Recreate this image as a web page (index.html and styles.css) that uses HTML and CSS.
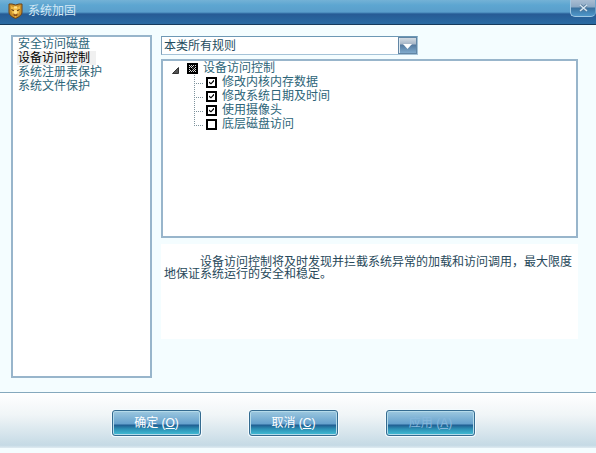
FILE: index.html
```html
<!DOCTYPE html>
<html lang="zh-CN">
<head>
<meta charset="utf-8">
<meta name="viewport" content="width=device-width, initial-scale=1">
<title>系统加固</title>
<link rel="stylesheet" href="styles.css">
</head>
<body>
<div class="window">
  <header class="titlebar">
    <svg class="badge" viewBox="0 0 15 16" aria-hidden="true">
      <path d="M1 1h3l3.500 1L11 1h3v8c0 3-3 5-6.500 6.500C4 14 1 12 1 9z" fill="#c9902c" stroke="#6b4218"/>
      <path d="M3 3l2 1 2.500-1L10 4l2-1v3l-1 4-3.500 4L4 10 3 6z" fill="#efb944"/>
      <path d="M6 3.500h3v2H6z" fill="#ffe28c"/>
      <path d="M3 6l3 1v1L4 7.500zM12 6L9 7v1l2-.5z" fill="#5c3410"/>
      <path d="M6.500 7h2l1 3-2 1-2-1z" fill="#ffe08a"/>
      <path d="M5 10.500l2.500 1 2.500-1-1 2.500H6z" fill="#8a4d1c"/>
    </svg>
    <h1 class="title">系统加固</h1>
    <button class="close" type="button" aria-label="关闭">
      <svg viewBox="0 0 9 8" aria-hidden="true"><path d="M1.500 1.500l6 5M7.500 1.500l-6 5" stroke="#56799b" stroke-width="3"/><path d="M1 1l7 6M8 1l-7 6" stroke="#d5e5f0" stroke-width="1.500"/></svg>
    </button>
  </header>

  <main class="content">
    <nav class="panel categories">
      <a class="category" href="#disk">安全访问磁盘</a>
      <a class="category current" href="#device" aria-current="true">设备访问控制</a>
      <a class="category" href="#registry">系统注册表保护</a>
      <a class="category" href="#files">系统文件保护</a>
    </nav>

    <section class="rules">
      <div class="filter">
        <select class="filter-select" aria-label="规则范围">
          <option>本类所有规则</option>
        </select>
        <span class="filter-arrow"><svg viewBox="0 0 16 15" aria-hidden="true"><path d="M4 6h9l-4.500 5z" fill="#fff"/></svg></span>
      </div>

      <div class="panel tree">
        <div class="row root">
          <svg class="expander" viewBox="0 0 7 7" aria-hidden="true"><path d="M6.500 .5v6h-6z" fill="#555" stroke="#333"/></svg>
          <input class="check mixed" type="checkbox" id="rule-all">
          <label for="rule-all">设备访问控制</label>
        </div>
        <ul class="branch">
          <li class="row leaf"><input class="check" type="checkbox" id="rule-memory" checked><label for="rule-memory">修改内核内存数据</label></li>
          <li class="row leaf"><input class="check" type="checkbox" id="rule-date" checked><label for="rule-date">修改系统日期及时间</label></li>
          <li class="row leaf"><input class="check" type="checkbox" id="rule-camera" checked><label for="rule-camera">使用摄像头</label></li>
          <li class="row leaf"><input class="check" type="checkbox" id="rule-disk"><label for="rule-disk">底层磁盘访问</label></li>
        </ul>
      </div>

      <p class="description">设备访问控制将及时发现并拦截系统异常的加载和访问调用，最大限度地保证系统运行的安全和稳定。</p>
    </section>
  </main>

  <footer class="actions">
    <button class="action" type="button">确定 (<u>O</u>)</button>
    <button class="action" type="button">取消 (<u>C</u>)</button>
    <button class="action" type="button" disabled>应用 (<u>A</u>)</button>
  </footer>
</div>
</body>
</html>
```

FILE: styles.css
```css
* {
  box-sizing: border-box;
}

body {
  margin: 0;
  background: #f4fdff;
  color: #2c6478;
  font: 12px/14px "Liberation Sans", "Noto Sans CJK SC", sans-serif;
}

.window {
  display: flex;
  flex-direction: column;
  min-height: 100vh;
  padding-bottom: 5px;
}

.titlebar {
  display: flex;
  align-items: flex-start;
  height: 25px;
  padding-left: 8px;
  border-bottom: 1px solid #153a5c;
  background: linear-gradient(#74b2d6 0, #5da6d1 5px, #5a9ecb 12px, #3f7eb2 13px, #265b95 14px, #2a6ba3 24px);
}

.badge {
  width: 15px;
  height: 16px;
  margin-top: 3px;
}

.title {
  flex: 1;
  margin: 4px 0 0 5px;
  color: #d3e8f5;
  font-size: 12px;
  font-weight: normal;
}

.close {
  width: 26px;
  height: 17px;
  padding: 0;
  border: 1px solid #9fc8e4;
  border-top: 0;
  border-right-color: #6ea3ca;
  border-radius: 0 0 5px 5px;
  background: linear-gradient(#a9bdd2 0, #8ba8c4 7px, #39719f 8px, #4f97ca 16px);
}

.close svg {
  display: block;
  width: 9px;
  height: 8px;
  margin: 0 auto;
}

.content {
  display: flex;
  flex: 1;
  gap: 9px;
  padding: 10px 18px 14px 11px;
}

.panel {
  border: 2px solid #98b5cb;
  background: #fff;
}

.categories {
  flex: 0 0 141px;
  padding-left: 4px;
}

.category {
  display: block;
  width: max-content;
  padding: 0 6px 0 1px;
  color: inherit;
  text-decoration: none;
}

.current {
  background: #f0f0f0;
  color: #000;
}

.rules {
  display: flex;
  flex: 1;
  flex-direction: column;
  min-width: 0;
}

.filter {
  position: relative;
  width: 257px;
  margin: 1px 0 4px;
}

.filter-select {
  display: block;
  width: 100%;
  height: 19px;
  padding: 0 22px 0 2px;
  border: 1px solid #a5c3d8;
  border-top-color: #6d98b5;
  border-left-color: #7f9fb8;
  border-radius: 0;
  outline: 0;
  appearance: none;
  background: #fff;
  color: #254c5e;
  font: inherit;
}

.filter-arrow {
  position: absolute;
  top: 1px;
  right: 1px;
  width: 19px;
  height: 17px;
  border: 1px solid #6286a5;
  background: linear-gradient(#d3dbe3 0, #a7b6c7 6px, #54799f 7px, #7faacc 15px);
  box-shadow: inset 1px 0 #dce8f0;
  pointer-events: none;
}

.filter-arrow svg {
  display: block;
  width: 16px;
  height: 15px;
}

.tree {
  height: 179px;
}

.row {
  display: flex;
  align-items: center;
  height: 14px;
}

.root {
  padding-left: 9px;
}

.expander {
  width: 7px;
  height: 7px;
  margin: 4px 8px 0 0;
}

.check {
  display: grid;
  width: 11px;
  height: 11px;
  margin: 0 5px 0 0;
  border: 2px solid #000;
  appearance: none;
  background: #fff;
  place-items: center;
}

.check:checked::after,
.mixed::after {
  content: "";
  width: 5px;
  height: 5px;
  background: #000;
  clip-path: polygon(0 40%, 40% 70%, 100% 0, 100% 40%, 40% 100%, 0 70%);
}

.mixed {
  background: repeating-conic-gradient(#000 0 25%, #ddd 0 50%) 0 0 / 2px 2px;
}

.branch {
  margin: 0 0 0 31px;
  padding: 0;
  list-style: none;
}

.leaf {
  padding-left: 12px;
  background:
    repeating-linear-gradient(#7d929c 0 1px, transparent 1px 2px) 0 0 / 1px 14px no-repeat,
    repeating-linear-gradient(90deg, #7d929c 0 1px, transparent 1px 2px) 0 8px / 9px 1px no-repeat;
}

.leaf:last-child {
  background-size: 1px 8px, 9px 1px;
}

.description {
  min-height: 95px;
  margin: 6px 0 0;
  padding: 12px 0 0 3px;
  background: #fff;
  color: #27485a;
  line-height: 12px;
  text-indent: 36px;
}

.actions {
  display: flex;
  justify-content: center;
  gap: 48px;
  height: 56px;
  padding: 17px 9px 0 0;
  border-top: 1px solid #85a9bd;
  background: linear-gradient(#fff, #f0f5f7 40%, #c5dae5 95%, #dfebf1);
}

.action {
  width: 89px;
  height: 26px;
  padding: 0;
  border: 1px solid #346b90;
  border-radius: 3px;
  background: linear-gradient(#9dc8df 0, #65a1cd 13px, #1f5d91 14px, #2c90b5 18px, #43c0d7 24px);
  box-shadow: inset 0 0 0 1px #b5dbea, 0 0 0 1px #f4fbfe;
  color: #fff;
  font: inherit;
}

.action:disabled {
  color: #87b8dc;
}
```
